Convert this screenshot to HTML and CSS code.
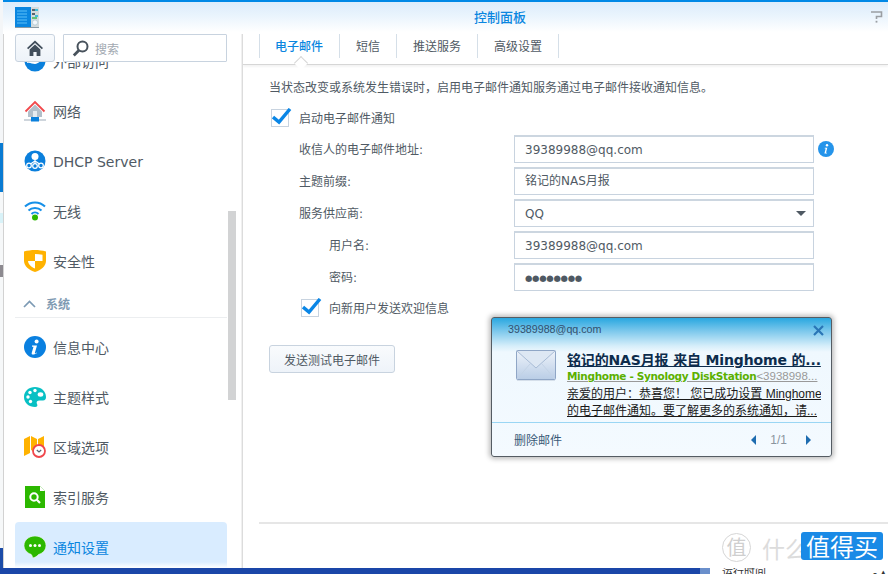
FILE: index.html
```html
<!DOCTYPE html>
<html lang="zh">
<head>
<meta charset="utf-8">
<title>控制面板</title>
<link rel="stylesheet" href="styles.css">
</head>
<body>
<div class="screen">
  <div class="desk-row">
    <div class="desk-strip">
      <div class="seg seg-white-a"></div>
      <div class="seg seg-blue"></div>
      <div class="seg seg-white-b"></div>
      <div class="seg seg-cyan"></div>
      <div class="seg seg-white-c"></div>
      <div class="seg seg-glyph"></div>
      <div class="seg seg-white-d"></div>
      <div class="seg seg-navy"></div>
    </div>
    <div class="window">
      <header class="titlebar">
        <svg class="app-icon" width="24" height="21" viewBox="0 0 24 21">
          <rect x="0" y="0" width="16" height="20" fill="#0a86e0"/>
          <rect x="16" y="0" width="8" height="20" fill="#d4dbdc"/>
          <rect x="0" y="20" width="24" height="1" fill="#8a9aa4"/>
          <path d="M2 4h10M2 7h10M2 10h10M2 13h10M2 16h10" stroke="#5cc0f8" stroke-width="1"/>
          <path d="M17 3h3M17 7h3" stroke="#2f3d48" stroke-width="1.4"/>
          <path d="M20 3h3M20 9h3" stroke="#12b4d8" stroke-width="1.4"/>
          <path d="M17 11h5" stroke="#39b54a" stroke-width="1.4"/>
          <circle cx="20" cy="15.5" r="2.6" fill="#f2f7fa" stroke="#a9c4d4" stroke-width=".7"/>
        </svg>
        <h1 class="title">控制面板</h1>
        <svg class="help-icon" width="12" height="12" viewBox="0 0 12 12">
          <path d="M0 1h10.5v4.5H5.5V8" fill="none" stroke="#9a9ea3" stroke-width="1.6"/>
          <rect x="4.6" y="9.8" width="1.8" height="1.8" fill="#9a9ea3"/>
        </svg>
      </header>
      <div class="panes">
        <aside class="sidebar">
          <div class="toolbar">
            <button class="home-btn" type="button">
              <svg width="16" height="16" viewBox="0 0 16 16">
                <path d="M8 .5L16 8l-1.2 1.2L8 3 1.2 9.2 0 8z" fill="#414e5b"/>
                <path d="M2.6 9.4L8 4.4l5.4 5V16H9.6v-4H6.4v4H2.6z" fill="#414e5b"/>
              </svg>
            </button>
            <div class="search">
              <svg width="17" height="17" viewBox="0 0 17 17">
                <circle cx="10.5" cy="6.5" r="5" fill="#fff" stroke="#48525c" stroke-width="2"/>
                <path d="M7 10.2L1.8 15.4" stroke="#48525c" stroke-width="2.8"/>
              </svg>
              <span class="search-text">搜索</span>
            </div>
          </div>
          <nav class="menu">
            <div class="item first">
              <svg class="ico" width="22" height="22" viewBox="0 0 22 22"><circle cx="11" cy="11" r="10.5" fill="#0a80dc"/><path d="M3 9c4-3 6 1 9 0s4-3 7-2v4c-4 0-5 3-8 3s-5-2-8-1z" fill="#fff"/></svg>
              <span>外部访问</span>
            </div>
            <div class="item">
              <svg class="ico" width="22" height="22" viewBox="0 0 22 22">
                <path d="M4 11.5L11 4.5l7 7V17H4z" fill="#b3bfca"/>
                <rect x="9" y="11" width="4" height="6" fill="#e6ebef"/>
                <path d="M1.5 11.5L11 2l9.500 9.500" fill="none" stroke="#f2494c" stroke-width="1.8"/>
                <path d="M0 20h22" stroke="#b3bfca" stroke-width="1.300"/>
                <rect x="7" y="17" width="8" height="4.500" fill="#0a80dc"/>
              </svg>
              <span>网络</span>
            </div>
            <div class="item">
              <svg class="ico" width="22" height="22" viewBox="0 0 22 22">
                <circle cx="11" cy="11" r="10.500" fill="#0a7fdc"/>
                <circle cx="11" cy="6.500" r="3.500" fill="#fff"/>
                <path d="M11 9v6M5 15l6-4 6 4" fill="none" stroke="#fff" stroke-width="1.100"/>
                <circle cx="5" cy="15.500" r="2.300" fill="#0a7fdc" stroke="#fff" stroke-width="1.200"/>
                <circle cx="11" cy="16" r="2.300" fill="#0a7fdc" stroke="#fff" stroke-width="1.200"/>
                <circle cx="17" cy="15.500" r="2.300" fill="#0a7fdc" stroke="#fff" stroke-width="1.200"/>
              </svg>
              <span class="latin">DHCP Server</span>
            </div>
            <div class="item">
              <svg class="ico" width="22" height="22" viewBox="0 0 22 22">
                <path d="M1 6.500C6.500 1 15.500 1 21 6.500" fill="none" stroke="#1690e8" stroke-width="2"/>
                <path d="M4.500 10.500C8 7 14 7 17.500 10.500" fill="none" stroke="#1690e8" stroke-width="2"/>
                <path d="M7.500 14C9.500 12 12.500 12 14.500 14" fill="none" stroke="#1690e8" stroke-width="2"/>
                <circle cx="11" cy="17.500" r="3" fill="#2cb800"/>
              </svg>
              <span>无线</span>
            </div>
            <div class="item">
              <svg class="ico" width="22" height="22" viewBox="0 0 22 22">
                <path d="M0 1.500C7 -.500 15 -.500 22 1.500V11c0 5-5 9-11 11C5 20 0 16 0 11z" fill="#ffb200"/>
                <path d="M11 4c2.500 0 5 .300 7.500 .800V11H11zM4 11h7v7.500C7.500 17 4.300 14.500 4 11z" fill="#fff"/>
              </svg>
              <span>安全性</span>
            </div>
            <div class="section">
              <svg class="chev" width="13" height="8" viewBox="0 0 13 8"><path d="M1 7l5.500-5.500L12 7" fill="none" stroke="#7c9ab4" stroke-width="1.700"/></svg>
              <span>系统</span>
            </div>
            <div class="item">
              <svg class="ico" width="22" height="22" viewBox="0 0 22 22">
                <circle cx="11" cy="11" r="11" fill="#0a80e0"/>
                <circle cx="12.600" cy="5.400" r="2" fill="#fff"/>
                <path d="M8 9.500h5l-2.100 7.300c-.200.700.400.800 1.900-.300l.300.500C11 18.500 7.200 19.500 7.700 17l1.800-6.200H8z" fill="#fff"/>
              </svg>
              <span>信息中心</span>
            </div>
            <div class="item">
              <svg class="ico" width="22" height="22" viewBox="0 0 22 22">
                <path d="M11 1C5 1 0 5 0 11s5 10 11 10c2.500 0 2.800-1.600 2-3-1-1.800 0-3.500 2.500-3.500H19c2 0 3-1.500 3-3.500C22 5 17 1 11 1z" fill="#08c0c4"/>
                <circle cx="6" cy="6.500" r="1.700" fill="#fff"/><circle cx="11" cy="4.500" r="1.700" fill="#fff"/><circle cx="4" cy="11" r="1.700" fill="#fff"/><circle cx="6.500" cy="15.500" r="1.700" fill="#fff"/><ellipse cx="16.500" cy="8.500" rx="2.800" ry="2.200" fill="#fff"/>
              </svg>
              <span>主题样式</span>
            </div>
            <div class="item">
              <svg class="ico" width="22" height="22" viewBox="0 0 22 22">
                <path d="M0 3l6-3v17l-6 3zM7 0l6 3v14l-6-3zM14 3l6-3v12h-6z" fill="#ffb200"/>
                <circle cx="15" cy="15" r="6" fill="#fff" stroke="#f0474c" stroke-width="1.800"/>
                <path d="M12.800 14l2.200 2 2.200-2" fill="none" stroke="#5a6570" stroke-width="1.200"/>
              </svg>
              <span>区域选项</span>
            </div>
            <div class="item">
              <svg class="ico" width="22" height="22" viewBox="0 0 22 22">
                <path d="M1 0h15l5 5v17H1z" fill="#2cb800"/>
                <path d="M16 0l5 5h-5z" fill="#fff"/>
                <circle cx="10" cy="11" r="3.700" fill="none" stroke="#fff" stroke-width="2"/>
                <path d="M12.800 13.800L16 17" stroke="#fff" stroke-width="2.200"/>
              </svg>
              <span>索引服务</span>
            </div>
            <div class="item active">
              <svg class="ico" width="22" height="22" viewBox="0 0 22 22">
                <path d="M11 0C5 0 0 4 0 9.500c0 4 3 7.500 7 8.800 1 1 1.500 2.500 1.500 3.700 2.500-.500 4.500-1.500 6-3.500C19 17.300 22 13.800 22 9.500 22 4 17 0 11 0z" fill="#2cb800" stroke="#fff" stroke-width=".600"/>
                <circle cx="6.500" cy="9.500" r="1.500" fill="#fff"/><circle cx="11" cy="9.500" r="1.500" fill="#fff"/><circle cx="15.500" cy="9.500" r="1.500" fill="#fff"/>
              </svg>
              <span>通知设置</span>
            </div>
          </nav>
          <div class="scrollbar"></div>
        </aside>
        <main class="content">
          <div class="tabs">
            <div class="tab current">电子邮件</div>
            <div class="tab">短信</div>
            <div class="tab">推送服务</div>
            <div class="tab">高级设置</div>
          </div>
          <div class="form">
            <p class="desc">当状态改变或系统发生错误时&#xFF0C;启用电子邮件通知服务通过电子邮件接收通知信息。</p>
            <label class="check-row">
              <span class="box">
                <svg class="tick" width="20" height="17" viewBox="0 0 20 17"><path d="M1 9l6 5L18 1" fill="none" stroke="#0a86e6" stroke-width="3.400"/></svg>
              </span>
              <span class="check-text">启动电子邮件通知</span>
            </label>
            <div class="fields">
              <div class="row">
                <span class="lbl">收信人的电子邮件地址:</span>
                <div class="field">39389988@qq.com</div>
                <svg class="info" width="16" height="16" viewBox="0 0 16 16">
                  <circle cx="8" cy="8" r="8" fill="#2594ea"/>
                  <circle cx="9" cy="4.200" r="1.200" fill="#fff"/>
                  <path d="M6.800 6.700h2.500l-1.300 5h1l-.200.800H6.400l1.300-5h-1z" fill="#fff"/>
                </svg>
              </div>
              <div class="row">
                <span class="lbl">主题前缀:</span>
                <div class="field cjk">铭记的NAS月报</div>
              </div>
              <div class="row">
                <span class="lbl">服务供应商:</span>
                <div class="field select">QQ<i class="caret"></i></div>
              </div>
              <div class="row sub">
                <span class="lbl">用户名:</span>
                <div class="field">39389988@qq.com</div>
              </div>
              <div class="row sub">
                <span class="lbl">密码:</span>
                <div class="field dots">●●●●●●●●</div>
              </div>
            </div>
            <label class="check-row nested">
              <span class="box">
                <svg class="tick" width="20" height="17" viewBox="0 0 20 17"><path d="M1 9l6 5L18 1" fill="none" stroke="#0a86e6" stroke-width="3.400"/></svg>
              </span>
              <span class="check-text">向新用户发送欢迎信息</span>
            </label>
            <button class="test-btn" type="button">发送测试电子邮件</button>
          </div>
          <div class="foot"></div>
        </main>
      </div>
    </div>
  </div>
  <div class="taskbar">
    <div class="task-blue"></div>
    <div class="task-edge"></div>
    <div class="task-win"><span class="task-text">运行时间</span><span class="task-mark">- ▴</span></div>
  </div>

  <section class="toast">
    <div class="toast-head">
      <span class="toast-addr">39389988@qq.com</span>
      <svg class="toast-x" width="11" height="11" viewBox="0 0 11 11"><path d="M1 1l9 9M10 1l-9 9" stroke="#2a76b6" stroke-width="2.200"/></svg>
    </div>
    <div class="toast-main">
      <svg class="envelope" width="40" height="31" viewBox="0 0 40 31">
        <defs><linearGradient id="env" x1="0" y1="0" x2="0" y2="1"><stop offset="0" stop-color="#eef3fa"/><stop offset="1" stop-color="#b9cde6"/></linearGradient></defs>
        <rect x=".5" y=".5" width="39" height="29" rx="1" fill="url(#env)" stroke="#8fa6c6"/>
        <path d="M1 1l19 17L39 1" fill="#dde7f3" stroke="#a8bcd6"/>
        <path d="M1 29l13-15M39 29L26 14" stroke="#c3d3e6"/>
        <path d="M1 30.500h38" stroke="#d5dfea"/>
      </svg>
      <div class="toast-text">
        <div class="t-title">铭记的NAS月报 来自 Minghome 的...</div>
        <div class="t-from"><b>Minghome - Synology DiskStation</b><span class="t-addr">&lt;3938998...</span></div>
        <div class="t-body">亲爱的用户&#xFF1A;恭喜您&#xFF01; 您已成功设置 Minghome</div>
        <div class="t-body">的电子邮件通知。要了解更多的系统通知&#xFF0C;请...</div>
      </div>
    </div>
    <div class="toast-foot">
      <span class="toast-del">删除邮件</span>
      <div class="pager">
        <i class="arrow left"></i>
        <span class="count">1/1</span>
        <i class="arrow right"></i>
      </div>
    </div>
  </section>

  <div class="watermark">
    <span class="wm-circle">值</span>
    <span class="wm-text">什么</span>
    <span class="wm-badge">值得买</span>
  </div>
</div>
</body>
</html>
```
FILE: styles.css
```css
* { box-sizing: border-box; }
html, body { margin: 0; padding: 0; }
body {
  width: 888px;
  height: 574px;
  overflow: hidden;
  background: #fff;
  font-family: "DejaVu Sans", "Noto Sans CJK SC", sans-serif;
  font-size: 12px;
  color: #505a64;
}
.screen { position: relative; width: 888px; height: 574px; display: flex; flex-direction: column; overflow: hidden; }
.desk-row { display: flex; height: 568px; }
.desk-strip { width: 3px; display: flex; flex-direction: column; }
.seg-white-a { height: 143px; background: #f4f6f8; }
.seg-blue { height: 49px; background: #0a7bd2; }
.seg-white-b { height: 21px; background: #f6f8f9; }
.seg-cyan { height: 10px; background: #d8f2f8; }
.seg-white-c { height: 42px; background: #f6f8f9; }
.seg-glyph { height: 12px; background: #8d8a90; }
.seg-white-d { height: 271px; background: #f6f8f9; }
.seg-navy { height: 20px; background: #1c4ca8; }

.window { flex: 1; display: flex; flex-direction: column; background: #fff; min-width: 0; }
.titlebar {
  height: 34px;
  flex: none;
  display: flex;
  align-items: flex-start;
  border-top: 2px solid #0088e6;
  background: linear-gradient(#dcecfb, #eaf4fd 14px, #fff 30px);
  position: relative;
}
.app-icon { margin: 5px 0 0 12px; }
.title {
  margin: 0;
  position: absolute;
  left: 0;
  right: 0;
  top: 6px;
  text-align: center;
  padding-left: 109px;
  font-size: 13px;
  line-height: 19px;
  font-weight: 500;
  color: #0a86e0;
}
.help-icon { margin: 9px 5px 0 auto; }

.panes { flex: 1; display: flex; min-height: 0; }
.sidebar {
  position: relative;
  width: 240px;
  flex: none;
  display: flex;
  flex-direction: column;
  border-left: 1px solid #d2d2d2;
  border-right: 1px solid #dcdcdc;
  box-shadow: inset -1px 0 0 #f0f0f0;
}
.toolbar { height: 28px; flex: none; display: flex; gap: 8px; padding-left: 11px; }
.home-btn {
  width: 40px;
  height: 28px;
  padding: 0;
  display: flex;
  align-items: center;
  justify-content: center;
  border: 1px solid #c8d3df;
  border-radius: 3px;
  background: linear-gradient(#f9fbfd, #eef3f9);
}
.search {
  width: 164px;
  height: 28px;
  display: flex;
  align-items: center;
  gap: 6px;
  padding-left: 8px;
  border: 1px solid #c8d3df;
  border-radius: 1px;
  background: #fff;
}
.search-text { color: #a2a9b1; font-size: 12px; }
.menu { flex: 1; min-height: 0; overflow: hidden; padding: 0 15px 0 11px; }
.item {
  height: 50px;
  display: flex;
  align-items: center;
  gap: 7px;
  padding-left: 9px;
  font-size: 14px;
  border-radius: 4px;
  color: #505a64;
}
.latin { margin-top: 2px; }
.item.first { margin-top: -26px; }
.item.active {
  color: #0a86e0;
  background: linear-gradient(#d9ecff, #d9ecff 40px, #fff 46px);
}
.ico { flex: none; }
.section {
  height: 32px;
  margin-bottom: 4px;
  padding: 4px 0 0 8px;
  display: flex;
  align-items: center;
  gap: 10px;
  border-bottom: 1px solid #eceef0;
  font-size: 12px;
  font-weight: 700;
  color: #7f9bb3;
}
.scrollbar {
  position: absolute;
  left: 224px;
  top: 177px;
  width: 8px;
  height: 189px;
  background: #d2d3d4;
}

.content { flex: 1; display: flex; flex-direction: column; min-width: 0; }
.tabs {
  height: 31px;
  flex: none;
  display: flex;
  padding-left: 16px;
  border-bottom: 1px solid #d6d6d6;
  box-shadow: 0 2px 2px #f4f4f4;
}
.tab {
  height: 24px;
  padding: 0 16px;
  border-right: 1px solid #d5dfe8;
  font-size: 12px;
  line-height: 27px;
  position: relative;
}
.tab:first-child { border-left: 1px solid #d5dfe8; padding: 0 16px 0 15px; }
.tab.current { color: #0a86e0; font-weight: 500; }
.tab.current::after {
  content: "";
  position: absolute;
  left: 36px;
  top: 24px;
  width: 9px;
  height: 9px;
  transform: rotate(45deg);
  background: #fff;
  border-left: 1px solid #d6d6d6;
  border-top: 1px solid #d6d6d6;
}
.form { padding: 13px 0 0 26px; }
.desc { margin: 0; height: 18px; line-height: 20px; font-size: 12px; white-space: nowrap; }
.check-row { display: flex; align-items: center; gap: 10px; height: 18px; margin: 13px 0 0 2px; }
.check-row.nested { margin: 8px 0 0 32px; gap: 10px; }
.check-text { margin-top: -2px; }
.box {
  width: 18px;
  height: 18px;
  flex: none;
  position: relative;
  border: 1px solid #c8d3df;
  background: #fff;
}
.tick { position: absolute; left: 0; top: -2px; }
.fields { margin: 8px 0 0 30px; }
.row { display: flex; align-items: center; height: 28px; margin-bottom: 4px; }
.lbl { width: 215px; flex: none; margin-top: -2px; }
.row.sub { padding-left: 30px; }
.row.sub .lbl { width: 185px; }
.field {
  width: 300px;
  height: 28px;
  flex: none;
  padding-left: 10px;
  line-height: 27px;
  border: 1px solid #c8d3df;
  border-top-width: 2px;
  border-top-color: #ccd6e0;
  background: #fff;
  position: relative;
}
.field.cjk { line-height: 25px; }
.field.dots { font-size: 8.5px; letter-spacing: -.3px; color: #4f5963; }
.caret {
  position: absolute;
  right: 7px;
  top: 10px;
  width: 0;
  height: 0;
  border-left: 5px solid transparent;
  border-right: 5px solid transparent;
  border-top: 5px solid #4f5963;
}
.info { margin-left: 4px; }
.test-btn {
  display: block;
  width: 126px;
  height: 28px;
  margin-top: 28px;
  padding: 0;
  border: 1px solid #c8d3df;
  border-radius: 3px;
  background: linear-gradient(#f9fbfd, #eef3f9);
  font: inherit;
  color: #505a64;
}
.foot { margin: auto 0 0 16px; height: 46px; border-top: 2px solid #e6e6e6; }

.taskbar { height: 6px; display: flex; overflow: hidden; }
.task-blue { width: 700px; background: #1a46a8; }
.task-edge { width: 10px; background: #6a8fcb; }
.task-win { flex: 1; display: flex; justify-content: space-between; padding: 0 2px 0 12px; background: #fff; font-size: 11px; line-height: 11px; color: #333; white-space: nowrap; }
.task-text { margin-top: -1px; }
.task-mark { margin-top: -1px; }

.toast {
  position: absolute;
  left: 491px;
  top: 317px;
  width: 341px;
  height: 140px;
  border: 1px solid #555c63;
  border-radius: 3px;
  background: linear-gradient(#29a7e0, #7cc8ec 13px, #d6eefa 28px, #eff8fe 34px, #f4faff);
  box-shadow: 0 0 5px 2px #bdbdbd;
  display: flex;
  flex-direction: column;
  font-family: "Liberation Sans", "Noto Sans CJK SC", sans-serif;
}
.toast-head { height: 25px; flex: none; display: flex; justify-content: space-between; padding: 5px 7px 0 16px; }
.toast-addr { font-size: 10.7px; line-height: 13px; color: #33506e; }
.toast-x { margin-top: 2px; }
.toast-main { flex: 1; display: flex; padding: 7px 0 0 24px; gap: 11px; border-bottom: 1px solid #9ad6f4; min-height: 0; }
.envelope { flex: none; }
.toast-text { width: 254px; min-width: 0; margin-top: 1px; }
.toast-text div { white-space: nowrap; overflow: hidden; text-decoration: underline; }
.t-title { font: 700 14px/18px "DejaVu Sans", "Noto Sans CJK SC", sans-serif; color: #0d2c4c; height: 18px; letter-spacing: -.15px; }
.t-from { font: 10.5px/15px "DejaVu Sans", "Noto Sans CJK SC", sans-serif; color: #999; height: 17px; }
.t-from b { color: #5bb000; font-weight: 700; letter-spacing: -.34px; }
.t-addr { font: 11.5px/15px "Liberation Sans", sans-serif; }
.t-body { font-size: 12px; line-height: 17px; height: 17px; color: #1a1a1a; }
.toast-foot { height: 33px; flex: none; display: flex; align-items: center; justify-content: space-between; padding: 0 20px 0 22px; }
.toast-del { font-size: 12px; color: #3a5a78; }
.pager { display: flex; align-items: center; }
.count { font-size: 12px; color: #8a949e; margin: 0 19px 0 14px; }
.arrow { width: 0; height: 0; border-top: 5px solid transparent; border-bottom: 5px solid transparent; }
.arrow.left { border-right: 5px solid #1e6cb0; }
.arrow.right { border-left: 5px solid #1e6cb0; }

.watermark { position: absolute; left: 722px; top: 532px; width: 161px; height: 32px; display: flex; align-items: flex-start; font-family: "Noto Sans CJK SC", sans-serif; }
.wm-circle {
  width: 29px;
  height: 29px;
  margin-top: 1px;
  border: 1px solid #d6d6d6;
  border-radius: 50%;
  font-size: 20px;
  line-height: 26px;
  text-align: center;
  color: #cfcfcf;
}
.wm-text { width: 50px; margin-left: 11px; margin-top: 1px; font-size: 23px; line-height: 30px; color: #dcdcdc; white-space: nowrap; }
.wm-badge {
  width: 82px;
  height: 28px;
  margin-left: -11px;
  border-radius: 3px;
  background: #1a8ae6;
  color: #fff;
  font-size: 24px;
  line-height: 28px;
  text-align: center;
  white-space: nowrap;
  position: relative;
}
```
